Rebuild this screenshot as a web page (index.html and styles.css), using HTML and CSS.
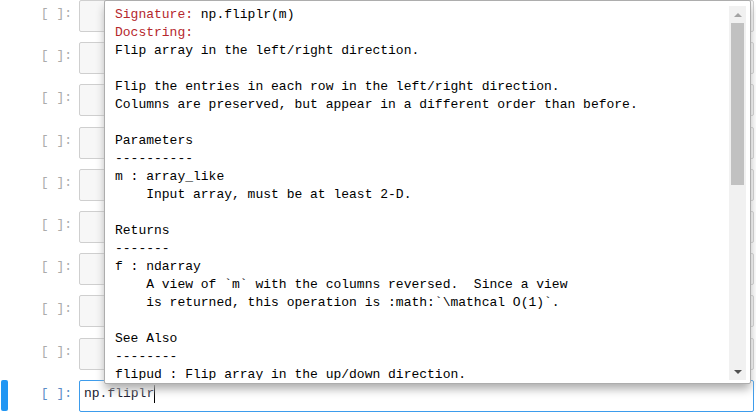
FILE: index.html
```html
<!DOCTYPE html>
<html>
<head>
<meta charset="utf-8">
<link rel="stylesheet" href="styles.css">
</head>
<body>
<div class="notebook">
  <div class="cell"><div class="prompt">[ ]:</div><div class="input"></div></div>
  <div class="cell"><div class="prompt">[ ]:</div><div class="input"></div></div>
  <div class="cell"><div class="prompt">[ ]:</div><div class="input"></div></div>
  <div class="cell"><div class="prompt">[ ]:</div><div class="input"></div></div>
  <div class="cell"><div class="prompt">[ ]:</div><div class="input"></div></div>
  <div class="cell"><div class="prompt">[ ]:</div><div class="input"></div></div>
  <div class="cell"><div class="prompt">[ ]:</div><div class="input"></div></div>
  <div class="cell"><div class="prompt">[ ]:</div><div class="input"></div></div>
  <div class="cell"><div class="prompt">[ ]:</div><div class="input"></div></div>
  <div class="cell selected"><div class="prompt">[ ]:</div><div class="input"><span class="code">np.fliplr</span></div></div>
</div>

<div class="tooltip">
  <div class="tt-text"><pre><span class="hd">Signature:</span> np.fliplr(m)
<span class="hd">Docstring:</span>
Flip array in the left/right direction.

Flip the entries in each row in the left/right direction.
Columns are preserved, but appear in a different order than before.

Parameters
----------
m : array_like
    Input array, must be at least 2-D.

Returns
-------
f : ndarray
    A view of `m` with the columns reversed.  Since a view
    is returned, this operation is :math:`\mathcal O(1)`.

See Also
--------
flipud : Flip array in the up/down direction.</pre></div>
  <div class="scrollbar">
    <div class="sb-btn"><span class="arrow-up"></span></div>
    <div class="sb-track"><div class="sb-thumb"></div></div>
    <div class="sb-btn"><span class="arrow-down"></span></div>
  </div>
</div>
</body>
</html>
```

FILE: styles.css
```css
html, body {
  margin: 0;
  padding: 0;
  background: #ffffff;
  overflow: hidden;
  width: 756px;
  height: 420px;
}

body {
  position: relative;
  font-family: "Liberation Mono", "DejaVu Sans Mono", monospace;
  font-size: 13px;
}

.notebook {
  display: flex;
  flex-direction: column;
  gap: 10.2px;
}

.cell {
  position: relative;
  display: flex;
  height: 32px;
}

.prompt {
  width: 79px;
  flex: none;
  box-sizing: border-box;
  padding: 5px 7px 0 0;
  text-align: right;
  line-height: 18px;
  color: #ababab;
  white-space: pre;
}

.input {
  width: 675px;
  flex: none;
  box-sizing: border-box;
  border: 1px solid #cfcfcf;
  border-radius: 2px;
  background: #f7f7f7;
  padding: 4px 4px;
  line-height: 18px;
  display: flex;
  align-items: flex-start;
}

.selected .prompt {
  color: #5b8dc7;
}

.selected .input {
  background: #ffffff;
  border-color: #3d9cec;
}

.selected::before {
  content: "";
  position: absolute;
  left: 1px;
  top: 0;
  width: 7px;
  height: 31px;
  border-radius: 2px;
  background: #2196f3;
}

.code {
  position: relative;
  color: #1a1a2e;
  white-space: pre;
}

.code::after {
  content: "";
  position: absolute;
  right: -1px;
  top: 0;
  width: 1px;
  height: 18px;
  background: #000;
}

.tooltip {
  position: absolute;
  left: 104px;
  top: 0;
  width: 647px;
  height: 384px;
  box-sizing: border-box;
  border: 1px solid #adadad;
  border-radius: 2px;
  background: #ffffff;
  box-shadow: 0 6px 10px -1px #adadad;
  padding: 5px 4px 3px 10px;
  display: flex;
  z-index: 10;
}

.tt-text {
  flex: 1;
  overflow: hidden;
}

.tt-text pre {
  margin: 0;
  font-family: "Liberation Mono", "DejaVu Sans Mono", monospace;
  font-size: 13px;
  line-height: 18px;
  color: #000000;
}

.hd {
  color: #b5272d;
}

.scrollbar {
  width: 17px;
  flex: none;
  background: #f1f1f1;
  display: flex;
  flex-direction: column;
}

.sb-btn {
  height: 17px;
  flex: none;
  display: flex;
  align-items: center;
  justify-content: center;
}

.sb-track {
  flex: 1;
  padding: 0 2px;
}

.sb-thumb {
  height: 162px;
  background: #c1c1c1;
}

.arrow-up {
  width: 0;
  height: 0;
  border-left: 4px solid transparent;
  border-right: 4px solid transparent;
  border-bottom: 4px solid #a3a3a3;
}

.arrow-down {
  width: 0;
  height: 0;
  border-left: 4px solid transparent;
  border-right: 4px solid transparent;
  border-top: 4px solid #505050;
}
```
